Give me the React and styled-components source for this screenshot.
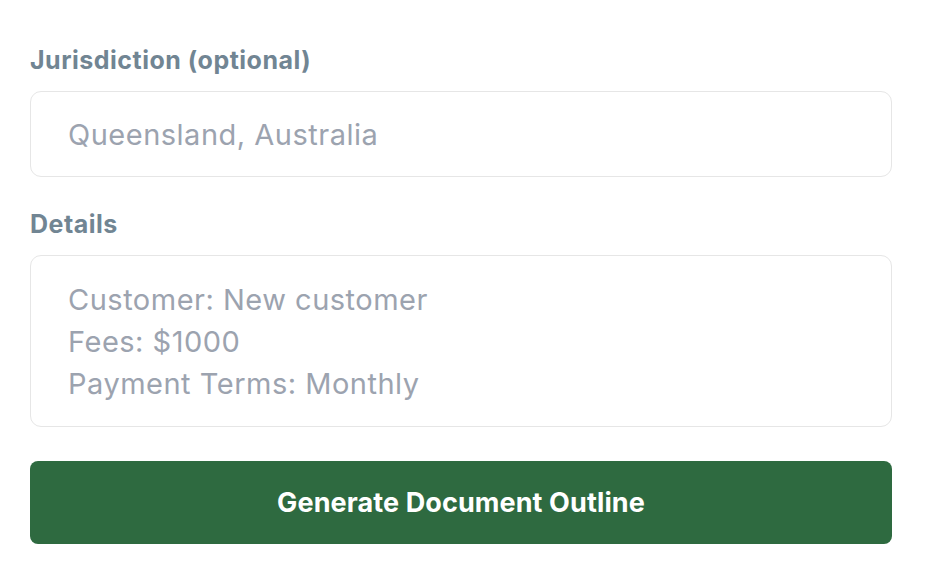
import React from "react";
import styled, { createGlobalStyle } from "styled-components";

const Global = createGlobalStyle`
  html, body { margin: 0; padding: 0; background: #ffffff; }
  body { font-family: Inter, "Noto Sans", sans-serif; }
  * { box-sizing: border-box; }
`;

const Form = styled.form`
  display: flex;
  flex-direction: column;
  padding: 44px 34px 0 30px;
  width: 926px;
`;

const Field = styled.div`
  display: flex;
  flex-direction: column;
  gap: 15px;
  margin-bottom: ${(p) => p.$gap}px;
`;

const Label = styled.label`
  font-size: 25px;
  line-height: 32px;
  font-weight: 700;
  color: #718593;
  letter-spacing: 0.5px;
`;

const Input = styled.input`
  height: 86px;
  width: 100%;
  border: 1.5px solid #e6e6e6;
  border-radius: 11px;
  padding: 0 37px;
  font-family: Inter, "Noto Sans", sans-serif;
  font-size: 29px;
  letter-spacing: 0.5px;
  color: #333;
  outline: none;
  &::placeholder { color: #9ca3af; }
`;

const TextArea = styled.textarea`
  height: 172px;
  width: 100%;
  border: 1.5px solid #e6e6e6;
  border-radius: 11px;
  padding: 23px 37px 20px;
  font-family: Inter, "Noto Sans", sans-serif;
  font-size: 29px;
  letter-spacing: 0.5px;
  line-height: 42px;
  color: #333;
  resize: none;
  outline: none;
  &::placeholder { color: #9ca3af; }
`;

const Button = styled.button`
  height: 83px;
  width: 100%;
  border: none;
  border-radius: 8px;
  background: #2e6a40;
  color: #ffffff;
  font-family: Inter, "Noto Sans", sans-serif;
  font-size: 27px;
  font-weight: 700;
  letter-spacing: 0.1px;
  cursor: pointer;
`;

export default function App() {
  return (
    <>
      <Global />
      <Form onSubmit={(e) => e.preventDefault()}>
        <Field $gap={31}>
          <Label>Jurisdiction (optional)</Label>
          <Input placeholder="Queensland, Australia" />
        </Field>
        <Field $gap={34}>
          <Label>Details</Label>
          <TextArea placeholder={"Customer: New customer\nFees: $1000\nPayment Terms: Monthly"} />
        </Field>
        <Button type="submit">Generate Document Outline</Button>
      </Form>
    </>
  );
}
